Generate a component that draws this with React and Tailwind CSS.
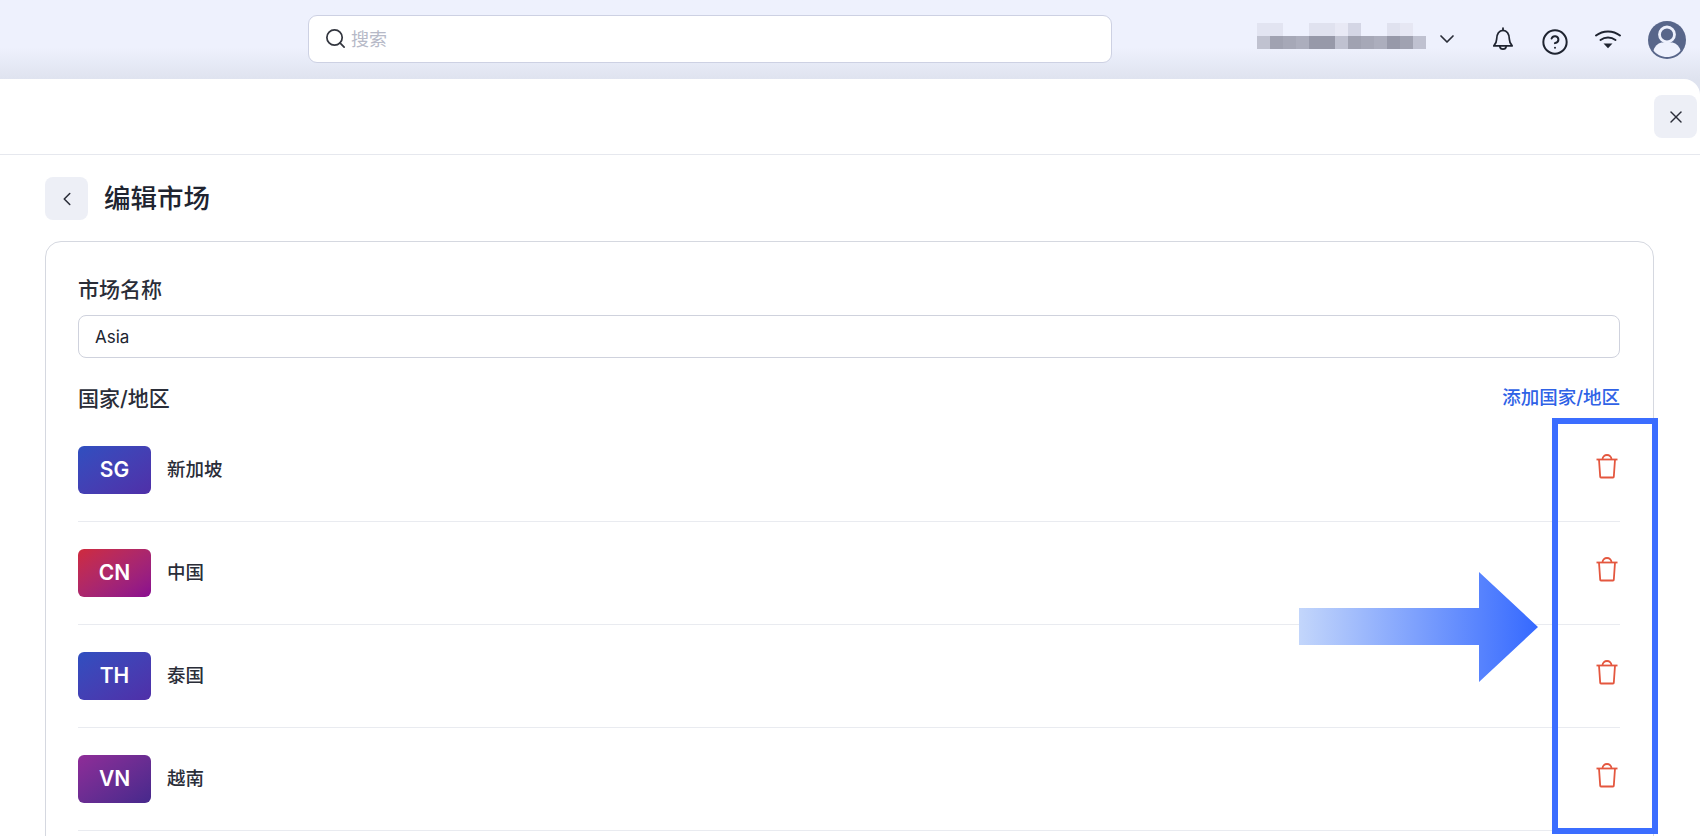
import React from 'react';
import { Search, ChevronDown, ChevronLeft, X, CircleHelp } from 'lucide-react';

const mosaicTop = [
  'bg-[#e2e4f1]', 'bg-[#e2e4f1]', 'bg-transparent', 'bg-transparent', 'bg-[#e0e2ef]', 'bg-[#e0e2ef]', 'bg-[#e8e9f5]',
  'bg-[#d4d6e5]', 'bg-transparent', 'bg-transparent', 'bg-[#e0e2ef]', 'bg-[#e6e7f3]', 'bg-transparent',
];

const mosaicBottom = [
  'bg-[#c0c2d0]', 'bg-[#a0a2b1]', 'bg-[#a6a8b7]', 'bg-[#acaebd]', 'bg-[#9799a9]', 'bg-[#9799a9]', 'bg-[#bfc1d0]',
  'bg-[#a0a2b1]', 'bg-[#a6a8b7]', 'bg-[#acaebd]', 'bg-[#9799a9]', 'bg-[#a0a2b1]', 'bg-[#bfc1d0]',
];

const countries = [
  { code: 'SG', name: '新加坡', badge: 'from-[#2f4fc0] to-[#4f2fa8]' },
  { code: 'CN', name: '中国', badge: 'from-[#cf2a3c] to-[#8a0a90]' },
  { code: 'TH', name: '泰国', badge: 'from-[#2f4fc0] to-[#4f2fa8]' },
  { code: 'VN', name: '越南', badge: 'from-[#8f2c98] to-[#46288c]' },
];

function TrashIcon() {
  return (
    <svg width="24" height="26" viewBox="0 0 24 26" fill="none" stroke="#e4573f" strokeWidth="1.8" strokeLinejoin="round">
      <path d="M1.500 6.500h21" />
      <path d="M7.500 6.500c0-6 9-6 9 0" />
      <path d="M4 6.500l1.200 17.200c0 .5.300.8.800.8h12c.5 0 .8-.3.8-.8L20 6.500" />
    </svg>
  );
}

function BellIcon() {
  return (
    <svg width="22" height="27" viewBox="0 0 24 28" fill="none" stroke="#1f2430" strokeWidth="1.900" strokeLinejoin="round" strokeLinecap="round">
      <path d="M12 1.500v2.500" />
      <path d="M5 14c0-6 3-10 7-10s7 4 7 10c0 3 1.200 5 3 7H2c1.800-2 3-4 3-7z" />
      <path d="M8.500 21.500c.5 4 6.500 4 7 0" />
    </svg>
  );
}

function WifiIcon() {
  return (
    <svg width="28" height="22" viewBox="0 0 28 22" fill="none" stroke="#1f2430" strokeWidth="2" strokeLinecap="round">
      <path d="M2 6.500c7-5.400 17-5.400 24 0" />
      <path d="M6.500 11c4.500-3.300 10.500-3.300 15 0" />
      <path d="M9.500 14.500h9l-4.500 4.800z" fill="#1f2430" stroke="none" />
    </svg>
  );
}

function AvatarIcon() {
  return (
    <svg width="38" height="38" viewBox="0 0 38 38">
      <circle cx="19" cy="19" r="19" fill="#58668a" />
      <circle cx="19" cy="13.500" r="7.500" fill="none" stroke="#eef1fd" strokeWidth="2.800" />
      <path d="M5.500 29.500c1.500-5.500 6-8 9-8h9c3 0 7.500 2.500 9 8-3 4-8 6.500-13.500 6.500s-10.500-2.500-13.500-6.500z" fill="#eef1fd" />
    </svg>
  );
}

function HighlightArrow() {
  return (
    <svg width="240" height="110" viewBox="0 0 240 110" className="absolute left-[1299px] top-[572px]">
      <defs>
        <linearGradient id="arrowFill" x1="0" x2="1" y1="0" y2="0">
          <stop offset="0" stopColor="#c3d6fb" />
          <stop offset="1" stopColor="#3569ff" />
        </linearGradient>
      </defs>
      <path d="M0 36h180V0l59 55-59 55V73H0z" fill="url(#arrowFill)" />
    </svg>
  );
}

export default function App() {
  return (
    <div className="relative h-[836px] overflow-hidden bg-[#dfe3ef] font-['Inter','Noto_Sans_CJK_SC',sans-serif] text-[#202430]">
      <header className="flex h-[79px] items-center bg-gradient-to-b from-[#eef1fd] from-60% to-[#dfe3ef] pl-[308px] pr-[14px]">
        <div className="mb-[2px] flex h-[48px] w-[804px] items-center gap-[4px] rounded-[9px] border border-[#cdd1e3] bg-white px-[15px]">
          <Search size={23} strokeWidth={1.8} className="text-[#33363f]" />
          <span className="mt-[2px] text-[18px] text-[#b6b9c7]">搜索</span>
        </div>
        <div className="ml-auto flex items-center">
          <div className="mt-[-8px] grid grid-cols-[repeat(13,13px)] grid-rows-[13px_13px]">
            {mosaicTop.map((color, i) => (
              <div key={`top-${i}`} className={color} />
            ))}
            {mosaicBottom.map((color, i) => (
              <div key={`bottom-${i}`} className={color} />
            ))}
          </div>
          <ChevronDown size={24} strokeWidth={1.7} className="ml-[9px] mt-[-2px] text-[#2a2d38]" />
          <div className="ml-[33px]">
            <BellIcon />
          </div>
          <CircleHelp size={28} strokeWidth={1.7} className="ml-[27px] mt-[4px] text-[#1f2430]" />
          <div className="ml-[25px]">
            <WifiIcon />
          </div>
          <div className="ml-[26px]">
            <AvatarIcon />
          </div>
        </div>
      </header>

      <main className="h-[757px] rounded-tr-[16px] bg-white">
        <div className="flex h-[76px] items-start justify-end border-b border-[#e6e8ee] pr-[3px] pt-[16px]">
          <button className="flex h-[43px] w-[43px] items-center justify-center rounded-[8px] bg-[#edeff6]">
            <X size={20} strokeWidth={1.7} className="text-[#2a2d38]" />
          </button>
        </div>

        <div className="pl-[45px] pr-[46px] pt-[22px]">
          <div className="flex items-center gap-[16px]">
            <button className="flex h-[43px] w-[43px] items-center justify-center rounded-[8px] bg-[#edeff6]">
              <ChevronLeft size={22} strokeWidth={1.7} className="text-[#2a2d38]" />
            </button>
            <h1 className="mt-[-2px] text-[26.500px] font-medium leading-[36px] text-[#202430]">编辑市场</h1>
          </div>

          <section className="mt-[21px] h-[700px] rounded-[16px] border border-[#d5d8e0] pl-[32px] pr-[33px] pt-[34px]">
            <label className="block text-[21px] font-medium leading-[28px] text-[#2a2d38]">市场名称</label>
            <div className="mt-[11px] flex h-[43px] items-center rounded-[8px] border border-[#cfd2dd] px-[16px] text-[17px]">
              <span className="mt-[2px]">Asia</span>
            </div>

            <div className="mt-[27px] flex items-start justify-between">
              <span className="text-[21px] font-medium leading-[28px] text-[#2a2d38]">国家/地区</span>
              <a className="mt-[-2px] text-[18.500px] font-medium leading-[28px] text-[#2f62e6]">添加国家/地区</a>
            </div>

            <ul className="mt-[6px]">
              {countries.map((country) => (
                <li key={country.code} className="flex h-[103px] items-center border-b border-[#e9ebf0]">
                  <div className={`flex h-[48px] w-[73px] items-center justify-center rounded-[6px] bg-gradient-to-br text-[21px] font-semibold text-white ${country.badge}`}>
                    {country.code}
                  </div>
                  <span className="ml-[16px] text-[18.500px] font-medium text-[#2a2d38]">{country.name}</span>
                  <button className="mb-[8px] ml-auto mr-[1px]">
                    <TrashIcon />
                  </button>
                </li>
              ))}
            </ul>
          </section>
        </div>
      </main>

      <HighlightArrow />
      <div className="absolute left-[1552px] top-[418px] h-[416px] w-[106px] border-[6px] border-[#3b6dff]" />
    </div>
  );
}
